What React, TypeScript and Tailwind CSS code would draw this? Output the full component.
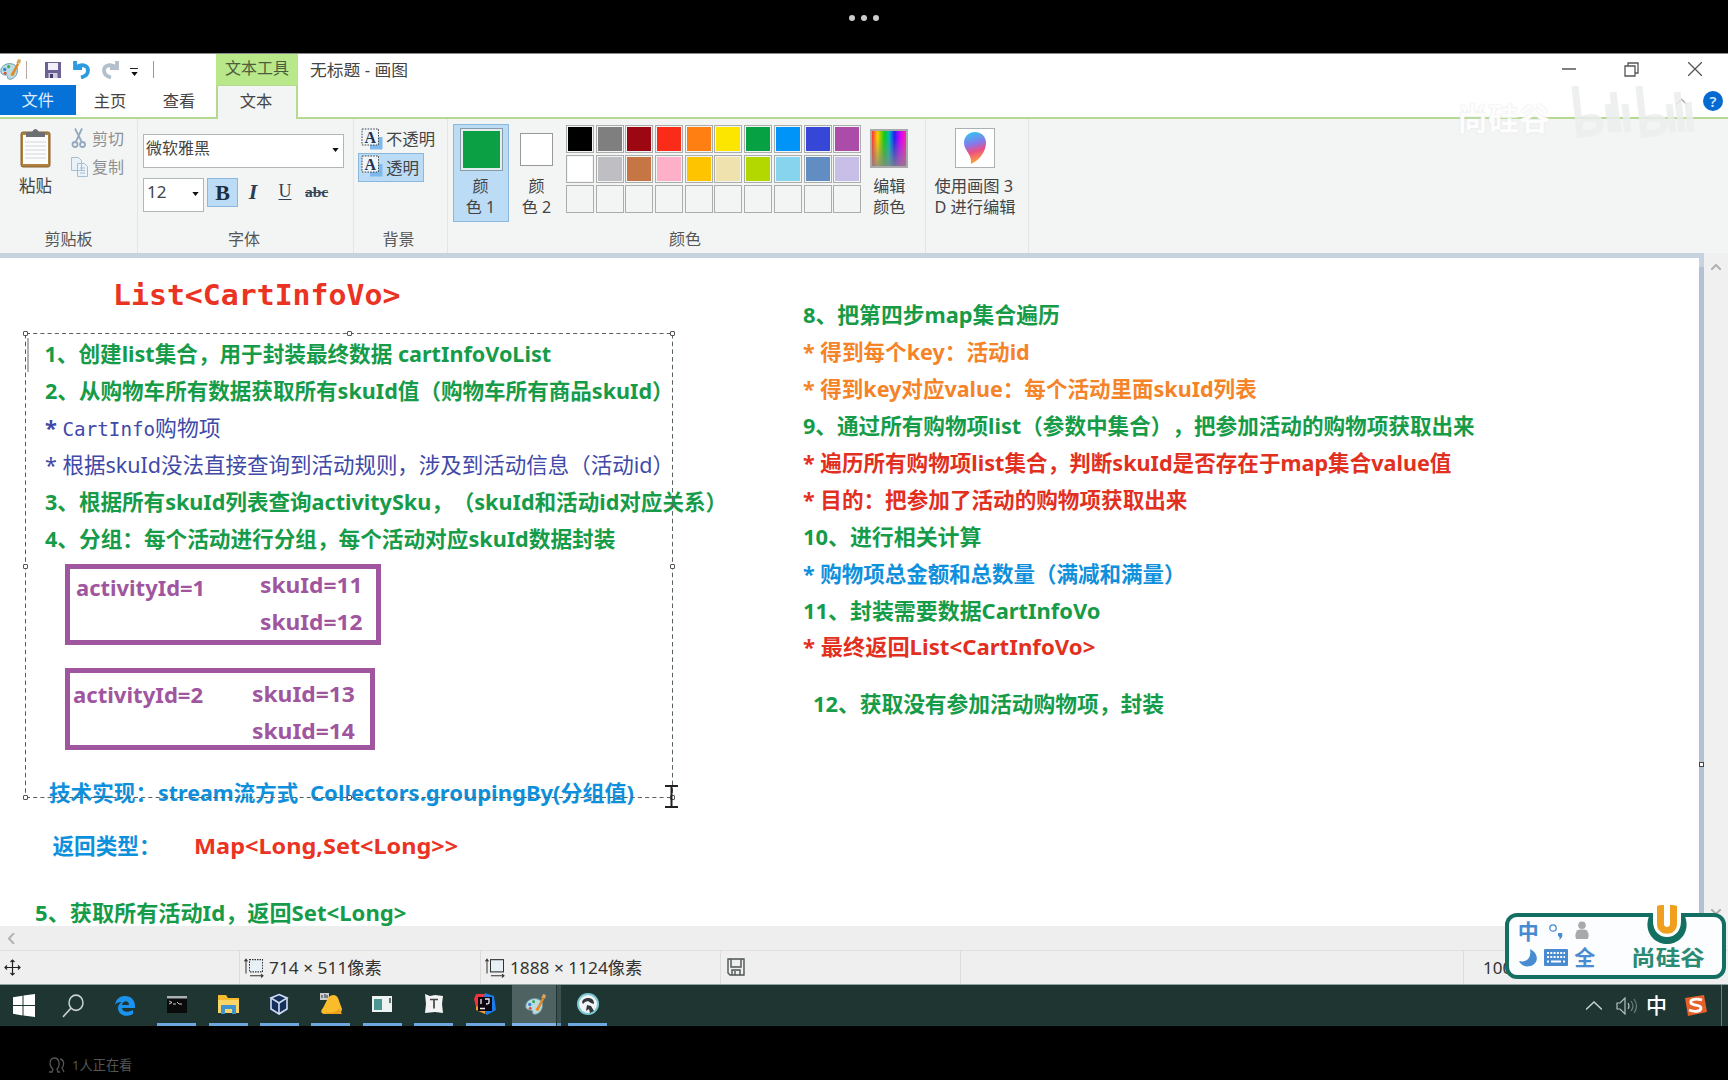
import { useLayoutEffect, useRef, type ReactNode } from 'react';

const swatches = [
  'bg-black', 'bg-[#7f7f7f]', 'bg-[#9c0712]', 'bg-[#fb2b1a]', 'bg-[#ff7f12]', 'bg-[#fce600]', 'bg-[#05a142]', 'bg-[#0093f8]', 'bg-[#3646d6]', 'bg-[#ab4ca8]',
  'bg-white', 'bg-[#bfbfc3]', 'bg-[#c67645]', 'bg-[#ffb0c9]', 'bg-[#ffc400]', 'bg-[#efe2ae]', 'bg-[#b2d800]', 'bg-[#87d4ee]', 'bg-[#628dc3]', 'bg-[#c8bfe9]',
];

/** A text run stretched horizontally to the given advance width. */
function Fit({ w, className = '', children }: { w: number; className?: string; children: ReactNode }) {
  const ref = useRef<HTMLSpanElement>(null);
  useLayoutEffect(() => {
    const el = ref.current;
    if (el) el.style.transform = `scaleX(${w / el.offsetWidth})`;
  }, [w]);
  return (
    <span ref={ref} className={`inline-block origin-left whitespace-pre ${className}`}>
      {children}
    </span>
  );
}

function Line({ w, className, children }: { w: number; className: string; children: ReactNode }) {
  return (
    <div className={`h-[36.95px] whitespace-pre leading-[37px] ${className}`}>
      <Fit w={w}>{children}</Fit>
    </div>
  );
}

function PaletteIcon() {
  return (
    <svg viewBox="0 0 24 24" className="h-[23px] w-[23px] shrink-0">
      <path d="M2 15C1 9 7 5 13 6c5 1 7 4 6 9-1 5-6 8-9 7-2-1 0-3-2-4-2-.5-5 0-6-3z" fill="#b9dce4" stroke="#6f99a8" />
      <circle cx="6" cy="12" r="1.7" fill="#3d7fd0" />
      <circle cx="10" cy="9" r="1.6" fill="#3cae5b" />
      <circle cx="6.5" cy="16" r="1.5" fill="#d94a38" />
      <circle cx="14" cy="17" r="1.8" fill="#f2c22e" />
      <path d="M12 18L19 5l2 1.500-6 12z" fill="#e08a2a" />
      <path d="M18 5l2-4 3 1-1 4z" fill="#d9a35a" />
    </svg>
  );
}

function OpacityIcon() {
  return (
    <svg viewBox="0 0 22 22" className="h-[22px] w-[22px] shrink-0">
      <rect x="9" y="9" width="12.5" height="12.5" fill="#7db9ee" />
      <rect x="1" y="1" width="16.5" height="16" fill="#eef5fb" stroke="#444" strokeDasharray="1.6 1.2" />
      <text x="9.3" y="15" textAnchor="middle" fontSize="16" fontWeight="700" fontFamily="Liberation Serif, serif" fill="#1f3350">A</text>
    </svg>
  );
}

function Arrow({ className = '' }: { className?: string }) {
  return (
    <svg viewBox="0 0 8 5" className={`h-[4px] w-[7px] ${className}`}>
      <path d="M0 0h8L4 5z" fill="#111" />
    </svg>
  );
}

function GroupLabel({ children }: { children: ReactNode }) {
  return <div className="absolute inset-x-0 top-[110px] text-center text-[#555]">{children}</div>;
}

function TitleBar() {
  return (
    <div className="flex h-[31px] items-stretch">
      <div className="flex w-[216px] items-center">
        <div className="-ml-[1px]"><PaletteIcon /></div>
        <div className="ml-[4px] h-[18px] w-px bg-[#b9a7a0]" />
        <svg viewBox="0 0 16 16" className="ml-[18px] h-[16px] w-[16px]">
          <path d="M0 0h16v16H0z" fill="#6d6193" />
          <path d="M3 1h10v7H3z" fill="#f1effa" />
          <path d="M3.500 11h9v5h-9z" fill="#cfcae0" />
          <path d="M5 12h3v4H5z" fill="#453a6c" />
        </svg>
        <svg viewBox="0 0 18 19" className="ml-[12px] h-[19px] w-[18px]">
          <path d="M2 1v7h7M3 7.500c5-4 12-2.500 12 3 0 4-3 6-7 7" fill="none" stroke="#2d9be0" strokeWidth="3.800" />
        </svg>
        <svg viewBox="0 0 18 19" className="ml-[10px] h-[19px] w-[18px]">
          <path d="M16 1v7H9M15 7.500c-5-4-12-2.500-12 3 0 4 3 6 7 7" fill="none" stroke="#b3bfcc" strokeWidth="3.800" />
        </svg>
        <div className="ml-[11px] flex flex-col items-center gap-[3px] pt-[4px]">
          <div className="h-px w-[8px] bg-[#222]" />
          <Arrow />
        </div>
        <div className="ml-[15px] h-[17px] w-px bg-[#999]" />
      </div>
      <div className="flex w-[82px] items-start justify-center bg-[#b9e88b] pt-[2px] text-[16px] leading-[24px] text-[#4b5e3c]">文本工具</div>
      <div className="ml-[12px] pt-[4px] text-[16.3px] leading-[24px] text-[#444]"><Fit w={98}>无标题 - 画图</Fit></div>
      <div className="ml-auto flex items-center pr-[26px] pb-[1px] text-[#555]">
        <svg viewBox="0 0 14 14" className="h-[14px] w-[14px]"><path d="M0 7h14" stroke="currentColor" strokeWidth="1.500" /></svg>
        <svg viewBox="0 0 15 15" className="ml-[48px] h-[15px] w-[15px]"><path d="M1 4h10v10H1zM4 4V1h10v10h-3" fill="none" stroke="currentColor" strokeWidth="1.300" /></svg>
        <svg viewBox="0 0 14 14" className="ml-[49px] h-[14px] w-[14px]"><path d="M0 0l14 14M14 0L0 14" stroke="currentColor" strokeWidth="1.300" /></svg>
      </div>
    </div>
  );
}

function Tabs() {
  return (
    <div className="relative flex h-[34px] border-b-2 border-[#b4da92] text-[16.3px] text-[#444]">
      <div className="flex h-[30px] w-[75.500px] items-center justify-center bg-[#0672d7] text-[#dbeafa]">文件</div>
      <div className="flex w-[69px] items-center justify-center">主页</div>
      <div className="flex w-[69px] items-center justify-center">查看</div>
      <div className="ml-[2.500px] flex h-[34px] w-[82px] items-center justify-center border-x-2 border-t border-[#b4da92] bg-[#f3f5f4] pr-[2px] pb-[3px]">文本</div>
      <div className="ml-auto flex items-center gap-[16px] pr-[5px]">
        <svg viewBox="0 0 10 6" className="h-[7px] w-[11px]"><path d="M0 6l5-5 5 5" fill="none" stroke="#aaa" strokeWidth="1.300" /></svg>
        <div className="flex h-[20px] w-[20px] items-center justify-center rounded-full bg-[#0569d2] text-[15px] font-semibold text-[#cfe4fa]">?</div>
      </div>
      <div className="absolute top-[-1px] left-[1457px] flex items-center text-[#e4e4e4]">
        <span className="pt-[14px] text-[31px] leading-[40px] font-bold text-[#fdfdfd] [text-shadow:0_0_2px_#dedede]">尚硅谷</span>
        <svg viewBox="0 0 126 54" className="ml-[20px] h-[54px] w-[126px]" fill="none" stroke="#ebecec" strokeOpacity=".85" strokeWidth="7">
          <path d="M5 2l5 48q22 0 20-12-4-8-20-2M38 20l4 28M43 8l5 40M55 20l3 28M69 2l5 48q22 0 20-12-4-8-20-2M99 20l4 28M107 8l5 40M118 18l3 30" />
        </svg>
      </div>
    </div>
  );
}

function Ribbon() {
  return (
    <div className="flex h-[134px] bg-[#f3f5f4] text-[16px] leading-[20px] text-[#444]">
      <div className="relative w-[138px] border-r border-[#e2e5e4]">
        <div className="flex pt-[10px]">
          <div className="ml-[17px] flex w-[37px] flex-col items-center">
            <svg viewBox="0 0 33 40" className="h-[40px] w-[33px]">
              <rect x="2" y="3" width="29" height="35" rx="2" fill="#b0813f" stroke="#87602c" />
              <path d="M4 6h25v29H4z" fill="#fbfcfc" />
              <path d="M7 3h6q3.500-6 7 0h6v5H7z" fill="#6c7073" />
              <path d="M6 13h21M6 17h21M6 21h21M6 25h21M6 29h21" stroke="#cfd6da" />
            </svg>
            <span className="mt-[7px] text-[16.500px]">粘贴</span>
          </div>
          <div className="-mt-[1px] ml-[17px] text-[#8d9092]">
            <div className="flex items-center">
              <svg viewBox="0 0 16 20" className="mr-[5px] h-[21px] w-[16px]" fill="none" stroke="#93a9bd" strokeWidth="1.800">
                <path d="M4 0l6.500 13M11 0L5 13" /><circle cx="4" cy="16" r="2.500" /><circle cx="11.500" cy="16" r="2.500" />
              </svg>
              剪切
            </div>
            <div className="mt-[8px] flex items-center">
              <svg viewBox="0 0 17 20" className="mr-[4px] h-[20px] w-[17px]" fill="#eaf2f9" stroke="#a6bed2">
                <path d="M.5.5h7l3 3v10H.5zM6.500 6.500h7l3 3v10h-10z" /><path d="M9 11h5M9 13.500h5M9 16h5" />
              </svg>
              复制
            </div>
          </div>
        </div>
        <GroupLabel>剪贴板</GroupLabel>
      </div>

      <div className="relative w-[216px] border-r border-[#e2e5e4] pt-[15px] pl-[5px]">
        <div className="flex h-[34px] w-[201px] items-center justify-between border border-[#b3b6b8] bg-white pr-[4px] pb-[7px] pl-[2px]">
          微软雅黑 <Arrow className="mt-[5px]" />
        </div>
        <div className="mt-[10px] flex items-start">
          <div className="flex h-[34px] w-[61px] items-center justify-between border border-[#b3b6b8] bg-white pr-[4px] pb-[7px] pl-[3px] text-[17px]">
            12 <Arrow className="mt-[5px]" />
          </div>
          <div className="ml-[3px] flex h-[29px] w-[31px] items-center justify-center border border-[#8ab8de] bg-[#bcdcf5] font-['Liberation_Serif',serif] text-[22px] font-bold text-[#1c2d44]">B</div>
          <div className="ml-[9px] h-[29px] w-[12px] text-center font-['Liberation_Serif',serif] text-[22px] leading-[28px] font-bold text-[#2e3d54] italic">I</div>
          <div className="ml-[17px] h-[29px] w-[18px] text-center font-['Liberation_Serif',serif] text-[18px] leading-[27px] text-[#2e3d54] underline underline-offset-2">U</div>
          <div className="ml-[11px] h-[29px] font-['Liberation_Serif',serif] text-[15.500px] leading-[27px] font-bold text-[#3a4350] line-through">abc</div>
        </div>
        <div className="absolute inset-x-0 top-[110px] pr-[3px] text-center text-[#555]">字体</div>
      </div>

      <div className="relative w-[94px] border-r border-[#e2e5e4] pt-[6px]">
        <div className="flex h-[28px] items-center gap-[3px] pl-[7px]">
          <OpacityIcon /> <Fit w={49}>不透明</Fit>
        </div>
        <div className="ml-[4px] flex h-[29px] w-[66px] items-center gap-[3px] border border-[#8ab8de] bg-[#bcdcf5] pl-[2px]">
          <div className="-mt-[3px]"><OpacityIcon /></div> <Fit w={33}>透明</Fit>
        </div>
        <div className="absolute top-[110px] left-[28.500px] text-[#555]">背景</div>
      </div>

      <div className="relative flex w-[478px] border-r border-[#e2e5e4] pt-[5px] pl-[5px]">
        <div className="flex h-[98px] w-[56px] flex-col items-center border border-[#8ab8de] bg-[#bcdcf5] pt-[3px] pr-px">
          <div className="ml-px h-[43px] w-[43px] border border-[#8a9ba8] bg-[#e4ecf0] p-[2px]"><div className="h-full bg-[#0ba043]" /></div>
          <div className="mt-[5px] text-center leading-[21px]">颜<br />色 1</div>
        </div>
        <div className="ml-[7px] flex w-[41px] flex-col items-center pt-[9px]">
          <div className="h-[33px] w-[33px] border border-[#999] bg-white" />
          <div className="mt-[10px] text-center leading-[21px]">颜<br />色 2</div>
        </div>
        <div className="mt-[1px] ml-[9px] grid h-[89px] grid-cols-10 gap-x-[1.700px] gap-y-[1.700px]">
          {Array.from({ length: 30 }, (_, i) => (
            <div key={i} className="h-[28px] w-[28px] border border-[#aaadac] p-px">
              <div className={`h-full ${swatches[i] ?? ''}`} />
            </div>
          ))}
        </div>
        <div className="ml-[8px] flex w-[40px] flex-col items-center pt-[5px]">
          <div className="relative h-[39px] w-[38px] border-2 border-[#aaa] bg-[linear-gradient(90deg,#f33_0%,#fc0_16%,#1c1_36%,#0bb_50%,#22e_66%,#c0f_82%,#f2a_100%)]">
            <div className="absolute inset-0 bg-[linear-gradient(180deg,transparent_20%,#888c_100%)]" />
          </div>
          <div className="mt-[8px] leading-[21px]">编辑<br />颜色</div>
        </div>
        <div className="absolute top-[110px] left-[221px] text-[#555]">颜色</div>
      </div>

      <div className="flex w-[103px] flex-col items-center border-r border-[#e2e5e4] pt-[9px] pr-[4px]">
        <div className="flex h-[40px] w-[40px] items-center justify-center border border-[#aeb1b3] bg-white">
          <svg viewBox="0 0 24 34" className="h-[34px] w-[24px]">
            <defs>
              <linearGradient id="drop" x1=".3" y1="0" x2=".5" y2="1">
                <stop offset="0" stopColor="#33c3f2" /><stop offset=".38" stopColor="#8679ea" /><stop offset=".62" stopColor="#ea4f86" /><stop offset="1" stopColor="#ffb02c" />
              </linearGradient>
            </defs>
            <path d="M12 1C5 1 1 6 1 12c0 8 8 10 7 21 9-4 15-13 15-21C23 6 19 1 12 1z" fill="url(#drop)" />
          </svg>
        </div>
        <div className="mt-[8px] whitespace-nowrap text-[16.300px] leading-[21px]">使用画图 3<br />D 进行编辑</div>
      </div>
    </div>
  );
}

function Handle({ className }: { className: string }) {
  return <div className={`absolute h-[5px] w-[5px] rounded-[1px] border border-[#555] bg-white ${className}`} />;
}

function Canvas() {
  return (
    <div className="flex h-[673px] bg-[#c6d3de]">
      <div className="relative mt-[5px] w-[1699px] overflow-hidden bg-white text-[21.600px] font-bold [text-spacing-trim:space-all]">
        <div className="absolute top-[19px] left-[113px] font-['DejaVu_Sans_Mono',monospace] text-[29px] leading-[36px] text-[#ea3323]">
          <Fit w={287}>{'List<CartInfoVo>'}</Fit>
        </div>

        <div className="absolute top-[77px] left-[44.500px] text-[#169b48]">
          <Line w={507} className="">1、创建list集合，用于封装最终数据 cartInfoVoList</Line>
          <Line w={629} className="">2、从购物车所有数据获取所有skuId值（购物车所有商品skuId）</Line>
          <Line w={176} className="font-normal text-[#4049a8]">
            <b>*</b> <span className="font-['DejaVu_Sans_Mono',monospace] text-[19px]">CartInfo</span>购物项
          </Line>
          <Line w={629} className="font-normal text-[#4049a8]">* 根据skuId没法直接查询到活动规则，涉及到活动信息（活动id）</Line>
          <Line w={682} className="">3、根据所有skuId列表查询activitySku，（skuId和活动id对应关系）</Line>
          <Line w={570} className="">4、分组：每个活动进行分组，每个活动对应skuId数据封装</Line>
        </div>

        <div className="absolute top-[306px] left-[65px] h-[81px] w-[316px] border-[5px] border-[#a0569f] text-[#a0569f]">
          <Fit w={129} className="absolute top-[3px] left-[6px]">activityId=1</Fit>
          <Fit w={102} className="absolute top-0 left-[190px]">skuId=11</Fit>
          <Fit w={102} className="absolute top-[37px] left-[190px]">skuId=12</Fit>
        </div>
        <div className="absolute top-[410px] left-[65px] h-[82px] w-[310px] border-[5px] border-[#a0569f] text-[#a0569f]">
          <Fit w={130} className="absolute top-[6px] left-[3px]">activityId=2</Fit>
          <Fit w={102.500} className="absolute top-[5px] left-[182px]">skuId=13</Fit>
          <Fit w={102.500} className="absolute top-[42px] left-[182px]">skuId=14</Fit>
        </div>

        <div className="absolute top-[519px] left-[49px] text-[#0f90dc]">
          <Fit w={108} className="absolute">技术实现：</Fit>
          <Fit w={140} className="absolute left-[108.500px]">stream流方式</Fit>
          <Fit w={324} className="absolute left-[260.500px]">Collectors.groupingBy(分组值)</Fit>
        </div>
        <div className="absolute top-[572px] left-[52.500px] text-[#0f90dc]">
          <Fit w={108} className="absolute">返回类型：</Fit>
          <Fit w={264} className="absolute left-[141px] text-[#ea3323]">{'Map<Long,Set<Long>>'}</Fit>
        </div>
        <div className="absolute top-[639px] left-[34.500px] text-[#169b48]">
          <Fit w={371}>{'5、获取所有活动Id，返回Set<Long>'}</Fit>
        </div>

        <svg className="absolute top-[72px] left-[22px] h-[475px] w-[656px]" fill="none" stroke="#55615c">
          <path d="M4 3.500h647M4 467.500h647" strokeDasharray="4 3.200" />
          <path d="M3.500 4v464M650.500 4v464" strokeDasharray="4.500 3.200" />
          <path d="M6 8v34" stroke="#666" />
        </svg>
        <Handle className="top-[73px] left-[23px]" />
        <Handle className="top-[73px] left-[347px]" />
        <Handle className="top-[73px] left-[670px]" />
        <Handle className="top-[306px] left-[23px]" />
        <Handle className="top-[306px] left-[670px]" />
        <Handle className="top-[537px] left-[23px]" />
        <Handle className="top-[537px] left-[347px]" />
        <Handle className="top-[537px] left-[670px]" />
        <svg viewBox="0 0 13 23" className="absolute top-[527px] left-[665px] h-[23px] w-[13px]">
          <path d="M0 1h13M0 22h13M6.500 1v21" stroke="#222" strokeWidth="2" />
        </svg>

        <div className="absolute top-[38px] left-[803px] text-[#169b48]">
          <Line w={256.500} className="">8、把第四步map集合遍历</Line>
          <Line w={227} className="text-[#f58428]">* 得到每个key：活动id</Line>
          <Line w={453.500} className="text-[#f58428]">* 得到key对应value：每个活动里面skuId列表</Line>
          <Line w={672} className="">9、通过所有购物项list（参数中集合），把参加活动的购物项获取出来</Line>
          <Line w={648.500} className="text-[#e2301f]">* 遍历所有购物项list集合，判断skuId是否存在于map集合value值</Line>
          <Line w={384} className="text-[#e2301f]">* 目的：把参加了活动的购物项获取出来</Line>
          <Line w={178.500} className="">10、进行相关计算</Line>
          <Line w={382} className="text-[#0f90dc]">* 购物项总金额和总数量（满减和满量）</Line>
          <Line w={297.500} className="">11、封装需要数据CartInfoVo</Line>
          <Line w={292} className="text-[#e2301f]">{'* 最终返回List<CartInfoVo>'}</Line>
        </div>
        <div className="absolute top-[427px] left-[813px] text-[#169b48]">
          <Line w={351.500} className="">12、获取没有参加活动购物项，封装</Line>
        </div>
      </div>
      <div className="relative w-[5px] bg-[#b3c1d6]">
        <div className="absolute top-0 h-[14px] w-full bg-[#c6d3de]" />
        <div className="absolute top-[509px] left-0 h-[5px] w-[5px] border border-[#444] bg-white" />
      </div>
      <div className="flex flex-1 flex-col items-center justify-between bg-[#f0f0f0] py-[11px]">
        <svg viewBox="0 0 10 6" className="h-[6px] w-[10px]"><path d="M0 6l5-5 5 5" fill="none" stroke="#b0b0b0" strokeWidth="2" /></svg>
        <svg viewBox="0 0 10 6" className="h-[6px] w-[10px]"><path d="M0 0l5 5 5-5" fill="none" stroke="#b0b0b0" strokeWidth="2" /></svg>
      </div>
    </div>
  );
}

function SizeIcon({ dashed = false }: { dashed?: boolean }) {
  return (
    <svg viewBox="0 0 20 18" className="h-[20px] w-[20px] shrink-0" fill="none" stroke="#333" preserveAspectRatio="none">
      <rect x="5.500" y="1.500" width="13" height="11" fill="#e6f0f5" strokeDasharray={dashed ? '1.500 1' : undefined} />
      <path d="M2 14V1M.5 3L2 1l1.500 2M6 16h13M17 14.500l2 1.500-2 1.500" />
    </svg>
  );
}

function StatusBar() {
  return (
    <div className="relative flex h-[34px] items-center border-t border-[#dfdfdf] bg-[#efefef] text-[17px] text-[#333]">
      <div className="flex h-full w-[240px] items-center border-r border-[#dcdcdc] pl-[4px]">
        <svg viewBox="0 0 17 17" className="h-[17px] w-[17px]" fill="none" stroke="#222" strokeWidth="1.200">
          <path d="M8.500 1v15M1 8.500h15M6.500 3l2-2 2 2M6.500 14l2 2 2-2M3 6.500l-2 2 2 2M14 6.500l2 2-2 2" />
        </svg>
      </div>
      <div className="flex h-full w-[240.500px] items-center gap-[5px] border-r border-[#dcdcdc] pl-[4px]">
        <SizeIcon dashed /> <Fit w={113}>714 × 511像素</Fit>
      </div>
      <div className="flex h-full w-[240px] items-center gap-[5px] border-r border-[#dcdcdc] pl-[4px]">
        <SizeIcon /> <Fit w={132}>1888 × 1124像素</Fit>
      </div>
      <div className="flex h-full w-[240.500px] items-center border-r border-[#dcdcdc] pb-[1px] pl-[6px]">
        <svg viewBox="0 0 18 18" className="h-[18px] w-[18px]" fill="none" stroke="#4c5653" strokeWidth="1.400">
          <path d="M1 1h16v16H3l-2-2zM4 1v8h10V1M5 17v-5h8v5M8 13v4" />
        </svg>
      </div>
      <div className="h-full w-[503px] border-r border-[#dcdcdc]" />
      <div className="pl-[19px]">100%</div>

      <div className="absolute top-[-38px] left-[1505px] flex h-[66px] w-[221px] rounded-[12px] border-4 border-[#126f61] bg-[#fbfdfe] text-[#488bd1]">
        <div className="-mt-[1px] grid h-[56px] w-[90px] grid-cols-3 content-start items-center justify-items-center pt-[2px] pl-[5px]">
          <span className="text-[21px] leading-[27px] font-bold">中</span>
          <svg viewBox="0 0 16 20" className="-ml-[1px] h-[20px] w-[16px]"><circle cx="5" cy="6" r="3.200" fill="none" stroke="currentColor" strokeWidth="1.300" /><path d="M10 11h4c1 3 0 5-3 7 1-2 1-3-1-4z" fill="currentColor" /></svg>
          <svg viewBox="0 0 14 19" className="mr-[6px] mb-[3px] h-[18px] w-[14px]" fill="#a9a9a9"><circle cx="7" cy="4.500" r="4" /><path d="M1 19c-2-3-1-9 3-10h6c4 1 5 7 3 10z" /></svg>
          <svg viewBox="0 0 18 18" className="h-[18px] w-[18px]"><path d="M11 0c8 4 9 12 3 16C8 19 2 17 0 12c6 2 13-2 11-12z" fill="currentColor" /></svg>
          <svg viewBox="0 0 24 17" className="h-[17px] w-[24px]"><rect width="24" height="17" rx="1" fill="currentColor" /><path d="M3 4h18M3 8h18" stroke="#fff" strokeWidth="2" strokeDasharray="2 1.300" /><path d="M3 12.500h2M7 12.500h10M19 12.500h2" stroke="#fff" strokeWidth="2" /></svg>
          <span className="text-[21px] leading-[25px] font-bold">全</span>
        </div>
        <div className="absolute top-[28px] left-[122px] text-[#2b8a72]">
          <Fit w={74} className="text-[21px] leading-[25px] font-bold">尚硅谷</Fit>
        </div>
        <svg viewBox="0 0 40 42" className="absolute top-[-13px] left-[138px] h-[42px] w-[40px]">
          <path d="M3 10C-5 27 7 40 20 40s25-13 17-30z" fill="#126f61" />
          <path d="M6 4v13c0 10 6 16 14 16s14-6 14-16V4z" fill="#fff" />
          <path d="M10 2q3-1.500 7-1v19c0 4 6 4 6 0V1q4-.5 7 1v18c0 13-20 13-20 0z" fill="#f0a01e" />
        </svg>
      </div>
    </div>
  );
}

function CmdIcon() {
  return (
    <svg viewBox="0 0 20 17" className="h-[17px] w-[20px]"><rect width="20" height="17" fill="#0a0a0a" /><path d="M0 0h20v2.500H0z" fill="#aab1b4" /><path d="M2 5l3 1.500L2 8M6 8h3M10 6l2 2h3" fill="none" stroke="#ddd" strokeWidth=".9" /></svg>
  );
}
function FolderIcon() {
  return (
    <svg viewBox="0 0 21 19" className="h-[19px] w-[21px]"><path d="M0 0h8l2 3h11v15H0z" fill="#f5b92e" /><path d="M0 5h21v13H0z" fill="#fbd565" /><path d="M3 19v-8q0-1 1-1h13q1 0 1 1v8h-4v-5H7v5z" fill="#3f94cf" /></svg>
  );
}
function CubeIcon() {
  return (
    <svg viewBox="0 0 20 22" className="h-[22px] w-[20px]"><path d="M10 0l9 4v13l-9 5-9-5V4z" fill="#14305c" /><path d="M10 1.500l8 3.500-8 5-8-5zM2 5v11l8 5V10M18 5v11l-8 5" fill="none" stroke="#d3dfef" strokeWidth="1.600" /></svg>
  );
}
function BellIcon() {
  return (
    <svg viewBox="0 0 22 22" className="h-[22px] w-[22px]"><path d="M0 0h9v7H0z" fill="#c9cdd0" /><path d="M2 2v3M5 1v4M7 2v3" stroke="#333" /><path d="M8 5c3-4 8-4 10 0l4 11c0 4-4 5-7 5H4c-4-1-3-4-1-6z" fill="#f9bd2c" /><path d="M4 19c7 2 13 0 15-4l3 6H7z" fill="#f0a01b" /></svg>
  );
}
function WindowIcon() {
  return (
    <svg viewBox="0 0 20 16" className="h-[16px] w-[20px]"><rect width="20" height="16" fill="#eef2f1" /><path d="M2 3h8v11H2z" fill="#4c9794" /><path d="M17 2h2v5h-2z" fill="#5b7276" /></svg>
  );
}
function TyporaIcon() {
  return (
    <svg viewBox="0 0 20 20" className="h-[20px] w-[20px]"><path d="M1 0l5 2 5-1 8 1-1 8 1 9-8-1-10 1 1-9z" fill="#f3f3f3" /><path d="M6 5.500h8M10 5.500v9" stroke="#444" strokeWidth="1.700" /></svg>
  );
}
function IdeaIcon() {
  return (
    <svg viewBox="0 0 22 22" className="h-[22px] w-[22px]"><path d="M2 1h9v18l-9-5-2-8z" fill="#f0343c" /><path d="M11 0l9 3 2 14-9 5-6-5z" fill="#1d7bea" /><path d="M2 13l9 4v4l-9-4z" fill="#f79a2b" /><path d="M4 4h14v14H4z" fill="#0d0712" /><path d="M7 6v5M11 6h4v3.500q0 1.500-3 1.500M6 15.500h5" fill="none" stroke="#eee" strokeWidth="1.300" /></svg>
  );
}
function DogIcon() {
  return (
    <svg viewBox="0 0 22 22" className="h-[22px] w-[22px]"><circle cx="11" cy="11" r="11" fill="#7dc8d3" /><circle cx="11" cy="11" r="9" fill="#f0f4f4" /><path d="M5 9c1-3 3-4 6-4 4 0 6 2 6 6l-3-1-3-2-3 1-2 2z" fill="#30363a" /><path d="M10 12l4 1 3 5-4 2-1-4-3 2z" fill="#30363a" /></svg>
  );
}

const apps = [CmdIcon, FolderIcon, CubeIcon, BellIcon, WindowIcon, TyporaIcon, IdeaIcon];

function Taskbar() {
  return (
    <div className="flex h-[42px] border-t border-[#90a39d] bg-[#1e3532] text-[#e8eeec]">
      <div className="flex w-[151px] items-center pl-[13px]">
        <svg viewBox="0 0 22 22" className="h-[23px] w-[22px]" fill="#fff" preserveAspectRatio="none"><path d="M0 3l9.500-1.300V10.500H0zM10.500 1.500L22 0v10.500H10.500zM0 11.500h9.500v9L0 19zM10.500 11.500H22V22l-11.500-1.500z" /></svg>
        <svg viewBox="0 0 22 22" className="ml-[27px] h-[24px] w-[22px]" fill="none" stroke="#c8d2cf" strokeWidth="1.500" preserveAspectRatio="none"><circle cx="14" cy="8" r="7" /><path d="M9 13l-8 8" /></svg>
        <svg viewBox="0 0 20 20" className="ml-[31px] h-[20px] w-[20px]"><path d="M0 9C1 3 5 0 10 0c6 0 10 4 10 10v2H7c0 4 6 5 11 2v4c-7 4-15 1-15-6 0-3 2-5 4-6-4 0-6 1-7 3zm7 0h7c0-5-6-5-7 0z" fill="#1b93ee" /></svg>
      </div>
      {apps.map((Icon, i) => (
        <div key={i} className="flex w-[51.400px] flex-col items-center">
          <div className="flex h-[38px] items-center"><Icon /></div>
          <div className="h-[3px] w-[39px] bg-[#6ea6df]" />
        </div>
      ))}
      <div className="ml-[1px] flex w-[44px] flex-col items-center bg-[#4d6261]">
        <div className="flex h-[38px] items-center pl-[3px]"><PaletteIcon /></div>
        <div className="h-[3px] w-full bg-[#7db3ea]" />
      </div>
      <div className="flex w-[5px] flex-col justify-end border-l border-[#1e3532] bg-[#3b504e]"><div className="h-[3px] bg-[#5d90c4]" /></div>
      <div className="ml-[7.500px] flex w-[39px] flex-col items-center">
        <div className="flex h-[38px] items-center"><DogIcon /></div>
        <div className="h-[3px] w-[39px] bg-[#6ea6df]" />
      </div>
      <div className="ml-auto flex items-center">
        <svg viewBox="0 0 16 9" className="h-[9px] w-[16px]" fill="none" stroke="#c8d2cf" strokeWidth="1.500"><path d="M0 8.500L8 1l8 7.500" /></svg>
        <svg viewBox="0 0 22 18" className="ml-[14px] h-[18px] w-[22px]" fill="none" stroke="#b6c0be" strokeWidth="1.200"><path d="M1 6h3l5-5v16l-5-5H1z" /><path d="M12 6q2 3 0 6" /><path d="M15 4q4 5 0 10M18 2q5 7 0 14" stroke="#6d7e7b" /></svg>
        <span className="ml-[8px] pb-[2px] text-[21px] leading-[30px] font-medium text-white">中</span>
        <svg viewBox="0 0 22 21" className="ml-[18px] h-[21px] w-[22px]"><path d="M0 3L19 0l3 17-19 4z" fill="#e6602a" /><path d="M17 5C9 3 5 5 6 8s10 1 10 5-7 4-12 2" fill="none" stroke="#fff" strokeWidth="2.800" /></svg>
        <div className="ml-[14px] h-[41px] w-[7px] border-l border-[#6c7d7a]" />
      </div>
    </div>
  );
}

export default function App() {
  return (
    <div className="flex h-[1080px] w-[1728px] flex-col overflow-hidden bg-black font-['Noto_Sans','Noto_Sans_CJK_SC',sans-serif]">
      <div className="flex h-[53px] items-start justify-center gap-[6px] pt-[15px]">
        <div className="h-[6px] w-[6px] rounded-full bg-[#ccc]" />
        <div className="h-[6px] w-[6px] rounded-full bg-[#ccc]" />
        <div className="h-[6px] w-[6px] rounded-full bg-[#ccc]" />
      </div>
      <div className="border-t border-[#8a8a8a] bg-white">
        <TitleBar />
        <Tabs />
        <Ribbon />
        <Canvas />
        <div className="flex h-[24px] items-center bg-[#eeeeee] pl-[8px]">
          <svg viewBox="0 0 7 11" className="h-[11px] w-[7px]"><path d="M6 0L1 5.500 6 11" fill="none" stroke="#b4b4b4" strokeWidth="2" /></svg>
        </div>
        <StatusBar />
        <Taskbar />
      </div>
      <div className="flex items-center gap-[7px] pt-[29px] pl-[48px] text-[13.200px] leading-[20px] text-[#555]">
        <svg viewBox="0 0 17 16" className="h-[16px] w-[17px]" fill="none" stroke="#555" strokeWidth="1.300">
          <path d="M1 15h3l1-3C0 8 2 1 6.500 1S13 8 9 12l1 3h2M12 2c5 1 4 7 2 9l2 4" />
        </svg>
        1人正在看
      </div>
    </div>
  );
}
